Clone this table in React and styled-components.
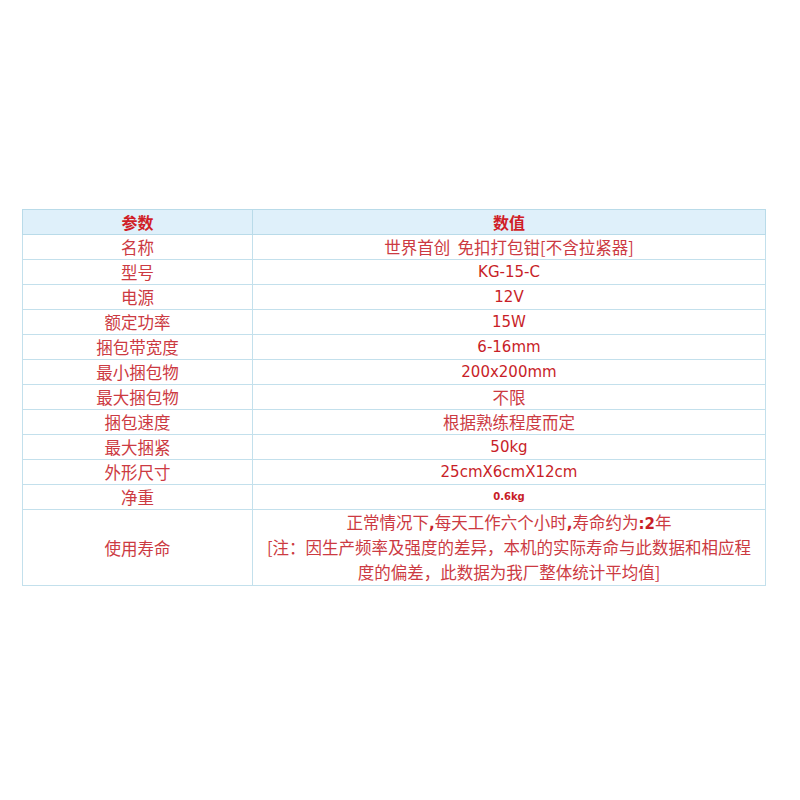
import React from "react";
import styled, { createGlobalStyle } from "styled-components";

const GlobalStyle = createGlobalStyle`
	html, body {
		margin: 0;
		padding: 0;
		background: #ffffff;
	}
`;

const specs = [
	{ name: "名称", value: "世界首创\u00a0\u00a0免扣打包钳[不含拉紧器]", kind: "cjk" },
	{ name: "型号", value: "KG-15-C", kind: "latin" },
	{ name: "电源", value: "12V", kind: "latin" },
	{ name: "额定功率", value: "15W", kind: "latin" },
	{ name: "捆包带宽度", value: "6-16mm", kind: "latin" },
	{ name: "最小捆包物", value: "200x200mm", kind: "latin" },
	{ name: "最大捆包物", value: "不限", kind: "cjk" },
	{ name: "捆包速度", value: "根据熟练程度而定", kind: "cjk" },
	{ name: "最大捆紧", value: "50kg", kind: "latin" },
	{ name: "外形尺寸", value: "25cmX6cmX12cm", kind: "latin" },
	{ name: "净重", value: "0.6kg", kind: "small" },
];

const App = () => {
	return (
		<Page>
			<GlobalStyle />
			<SpecTable>
				<colgroup>
					<col style={{ width: 230 }} />
					<col />
				</colgroup>
				<thead>
					<tr>
						<HeadCell>参数</HeadCell>
						<HeadCell>数值</HeadCell>
					</tr>
				</thead>
				<tbody>
					{specs.map((row) => (
						<tr key={row.name}>
							<Cell>{row.name}</Cell>
							<Cell kind={row.kind}>{row.value}</Cell>
						</tr>
					))}
					<tr>
						<Cell>使用寿命</Cell>
						<Cell>
							<Line>
								正常情况下<Mark>,</Mark>每天工作六个小时<Mark>,</Mark>寿命约为
								<Mark>:2</Mark>年
							</Line>
							<Line>[注：因生产频率及强度的差异，本机的实际寿命与此数据和相应程</Line>
							<Line>度的偏差，此数据为我厂整体统计平均值]</Line>
						</Cell>
					</tr>
				</tbody>
			</SpecTable>
		</Page>
	);
};

export default App;

const Page = styled.div`
	width: 800px;
	height: 800px;
	padding: 209px 0 0 22px;
	box-sizing: border-box;
`;
const SpecTable = styled.table`
	width: 744px;
	border-collapse: collapse;
	table-layout: fixed;
	border: 1px solid #b9dbe9;
`;
const HeadCell = styled.th`
	height: 24px;
	padding: 0;
	background: #dff0fa;
	border: 1px solid #b9dbe9;
	color: #d01d27;
	font-family: "Noto Sans CJK SC", sans-serif;
	font-size: 16px;
	font-weight: 700;
	line-height: 24px;
	text-align: center;
`;
const Cell = styled.td`
	height: 24px;
	padding: 0;
	border: 1px solid #c3e0ec;
	color: ${(p) => (p.kind === "latin" || p.kind === "small" ? "#c81e28" : "#cc3a42")};
	font-family: ${(p) =>
		p.kind === "latin" || p.kind === "small"
			? '"DejaVu Sans", Verdana, sans-serif'
			: '"Noto Sans CJK SC", sans-serif'};
	font-size: ${(p) => (p.kind === "latin" ? "15px" : p.kind === "small" ? "10px" : "16.5px")};
	font-weight: ${(p) => (p.kind === "small" ? 700 : 400)};
	line-height: 24px;
	text-align: center;
	white-space: nowrap;
`;
const Line = styled.div`
	height: 25px;
	line-height: 25px;
`;
const Mark = styled.span`
	font-family: "DejaVu Sans", Verdana, sans-serif;
	font-size: 15px;
	font-weight: 700;
	color: #c81e28;
`;
